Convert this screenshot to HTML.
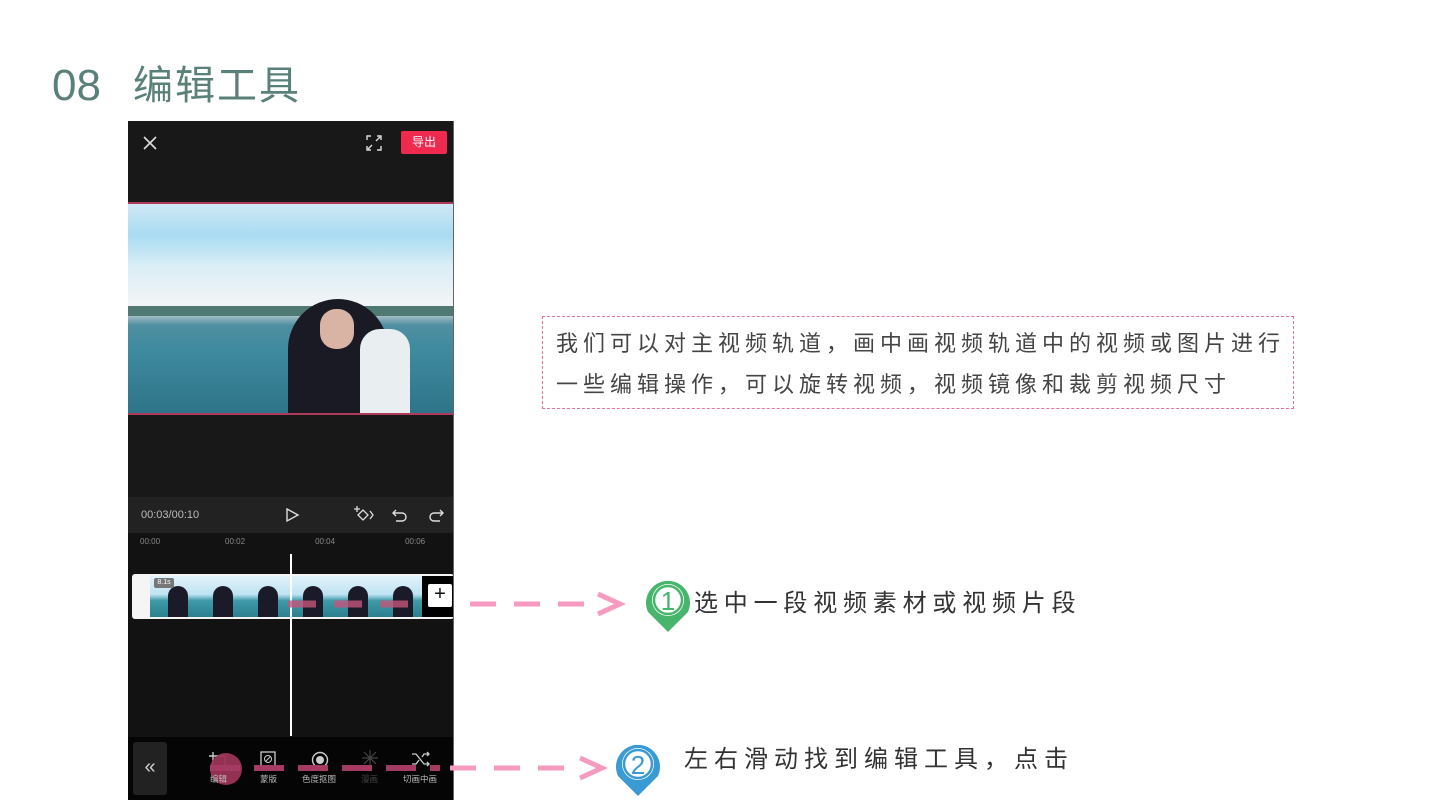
<!DOCTYPE html>
<html><head><meta charset="utf-8"><style>
*{margin:0;padding:0;box-sizing:border-box}
body{width:1440px;height:810px;background:#fff;position:relative;overflow:hidden;font-family:"Liberation Sans","Noto Sans CJK SC",sans-serif}
.a{position:absolute}
</style></head><body>
<div class="a" style="left:52px;top:58px;font-size:44px;color:#5a807a;line-height:56px">08</div>
<div class="a" style="left:133px;top:58px;font-size:40px;color:#5a807a;line-height:56px;letter-spacing:2px">编辑工具</div>

<!-- phone -->
<div class="a" style="left:128px;top:121px;width:326px;height:679px;background:#181818;overflow:hidden">
  <svg class="a" style="left:14px;top:14px" width="16" height="16"><path d="M2 2L14 14M14 2L2 14" stroke="#ddd" stroke-width="1.6"/></svg>
  <svg class="a" style="left:238px;top:14px" width="16" height="16"><path d="M1 5V1H5M11 1H15V5M15 11V15H11M5 15H1V11M2 14L6 10M14 2L10 6" stroke="#ddd" stroke-width="1.4" fill="none"/></svg>
  <div class="a" style="left:273px;top:10px;width:46px;height:23px;background:#f0294f;border-radius:2px;color:#fff;font-size:12px;text-align:center;line-height:23px">导出</div>
  <!-- video -->
  <div class="a" style="left:0;top:81px;width:326px;height:213px;border-top:2px solid #b03a5a;border-bottom:2px solid #b03a5a;background:linear-gradient(180deg,#cfe8f5 0%,#a9dcf2 15%,#dbeef6 30%,#eef3f6 45%,#f2f5f6 50%,#9bb8c2 54%,#4f8fa0 58%,#3f8a9f 70%,#2e7488 100%)">
    <div class="a" style="left:0;top:102px;width:326px;height:10px;background:#4f7a74"></div>
    <div class="a" style="left:160px;top:95px;width:100px;height:114px;background:#1a1a24;border-radius:50px 50px 0 0"></div>
    <div class="a" style="left:192px;top:105px;width:34px;height:40px;background:#d9b3a3;border-radius:16px"></div>
    <div class="a" style="left:232px;top:125px;width:50px;height:84px;background:#e9eef0;border-radius:20px 20px 0 0"></div>
  </div>
  <!-- controls -->
  <div class="a" style="left:0;top:376px;width:326px;height:36px;background:#222"></div>
  <div class="a" style="left:13px;top:388px;font-size:11px;color:#bbb">00:03/00:10</div>
  <svg class="a" style="left:156px;top:386px" width="16" height="16"><path d="M3 2L14 8L3 14Z" stroke="#ddd" stroke-width="1.4" fill="none"/></svg>
  <svg class="a" style="left:224px;top:384px" width="24" height="20"><path d="M6 10L11 5L16 10L11 15Z M18 6L21 10L18 14 M2 4H8M5 1V7" stroke="#ddd" stroke-width="1.3" fill="none"/></svg>
  <svg class="a" style="left:263px;top:386px" width="18" height="16"><path d="M5 3L2 6L5 9M2 6H11A4 4 0 0 1 11 14H5" stroke="#ddd" stroke-width="1.4" fill="none"/></svg>
  <svg class="a" style="left:299px;top:386px" width="18" height="16"><path d="M13 3L16 6L13 9M16 6H7A4 4 0 0 0 7 14H13" stroke="#ddd" stroke-width="1.4" fill="none"/></svg>
  <div class="a" style="left:0;top:412px;width:326px;height:204px;background:#121212"></div>
  <div class="a" style="left:12px;top:416px;font-size:8px;color:#888;width:310px;white-space:nowrap">00:00<span style="margin-left:65px">00:02</span><span style="margin-left:70px">00:04</span><span style="margin-left:70px">00:06</span></div>
  <div class="a" style="left:4px;top:453px;width:322px;height:45px;background:#f5f5f5;border-radius:3px"></div>
  <div class="a" style="left:22px;top:455px;width:272px;height:41px;background:linear-gradient(180deg,#e2f2fa 0%,#bfe3f3 45%,#3e9aa8 60%,#2c7f8e 100%)"></div>
  <div class="a" style="left:40px;top:465px;width:20px;height:31px;background:#1a1a28;border-radius:10px 10px 0 0;box-shadow:45px 0 #1a1a28,90px 0 #1a1a28,135px 0 #1a1a28,180px 0 #1a1a28,225px 0 #1a1a28"></div>
  <div class="a" style="left:26px;top:457px;width:20px;height:10px;background:#777;font-size:7px;color:#fff;text-align:center;line-height:10px;border-radius:2px">8.1s</div>
  <div class="a" style="left:294px;top:455px;width:32px;height:41px;background:#000"></div>
  <div class="a" style="left:300px;top:463px;width:24px;height:23px;background:#fff;border-radius:2px;font-size:20px;line-height:21px;text-align:center;color:#111">+</div>
  <div class="a" style="left:162px;top:433px;width:2px;height:182px;background:#fff"></div>
  <div class="a" style="left:0;top:616px;width:326px;height:63px;background:#050505"></div>
  <div class="a" style="left:5px;top:621px;width:34px;height:53px;background:#222;border-radius:3px;color:#ccc;font-size:20px;text-align:center;line-height:50px">«</div>
  <svg class="a" style="left:80px;top:630px" width="22" height="20"><path d="M5 1V15H21M1 5H17V19" stroke="#ccc" stroke-width="1.4" fill="none"/></svg>
  <div class="a" style="left:82px;top:632px;width:32px;height:32px;background:#9b3456;border-radius:50%;opacity:.95"></div>
  <svg class="a" style="left:132px;top:630px" width="16" height="16"><rect x="1" y="1" width="14" height="14" stroke="#ccc" fill="none" stroke-width="1.3"/><circle cx="8" cy="8" r="3.5" stroke="#ccc" fill="none"/><path d="M6 10L10 6" stroke="#ccc"/></svg>
  <svg class="a" style="left:183px;top:630px" width="18" height="18"><circle cx="9" cy="9" r="7.5" stroke="#ccc" fill="none" stroke-width="1.4"/><circle cx="9" cy="9" r="4" fill="#ccc"/></svg>
  <svg class="a" style="left:233px;top:628px" width="18" height="18"><path d="M9 1V17M1 9H17M3 3L15 15M15 3L3 15" stroke="#444" stroke-width="1.2"/></svg>
  <svg class="a" style="left:283px;top:630px" width="20" height="16"><path d="M1 3H5L13 13H18M1 13H5L8 9M11 6L13 3H18M16 1L18 3L16 5M16 11L18 13L16 15" stroke="#ccc" stroke-width="1.3" fill="none"/></svg>
  <div class="a" style="left:72px;top:652px;width:250px;font-size:8.5px;color:#bbb;white-space:nowrap"><span class="a" style="left:10px">编辑</span><span class="a" style="left:60px">蒙版</span><span class="a" style="left:102px">色度抠图</span><span class="a" style="left:161px;color:#444">漫画</span><span class="a" style="left:203px">切画中画</span></div>
  <div class="a" style="left:325px;top:0;width:1px;height:679px;background:#666"></div>
</div>

<!-- dashes -->
<svg class="a" style="left:0;top:0" width="1440" height="810">
  <path d="M288 604H420" stroke="#c4557b" stroke-width="7" stroke-dasharray="28 18" opacity=".8"/>
  <path d="M470 604H590" stroke="#f79ac0" stroke-width="5" stroke-dasharray="26 18"/>
  <path d="M598 594L620 604L598 614" stroke="#f79ac0" stroke-width="5" fill="none"/>
  <path d="M210 768H440" stroke="#a53a62" stroke-width="6" stroke-dasharray="30 14"/>
  <path d="M450 768H570" stroke="#f79ac0" stroke-width="5" stroke-dasharray="26 18"/>
  <path d="M580 758L602 768L580 778" stroke="#f79ac0" stroke-width="5" fill="none"/>
  <path d="M668 632L648 612A22 22 0 1 1 688 612Z" fill="#47b66c"/>
  <circle cx="668" cy="600" r="16" fill="#fff"/><circle cx="668" cy="600" r="14" fill="none" stroke="#47b66c" stroke-width="2.5"/>
  <text x="668" y="610" font-size="26" text-anchor="middle" fill="#47b66c" font-family="Liberation Sans">1</text>
  <path d="M638 796L618 776A22 22 0 1 1 658 776Z" fill="#3a9bd4"/>
  <circle cx="638" cy="764" r="16" fill="#fff"/><circle cx="638" cy="764" r="14" fill="none" stroke="#3a9bd4" stroke-width="2.5"/>
  <text x="638" y="774" font-size="26" text-anchor="middle" fill="#3a9bd4" font-family="Liberation Sans">2</text>
</svg>

<div class="a" style="left:694px;top:588px;font-size:24px;color:#333;letter-spacing:5.8px;line-height:32px;white-space:nowrap">选中一段视频素材或视频片段</div>
<div class="a" style="left:684px;top:744px;font-size:24px;color:#333;letter-spacing:6px;line-height:32px;white-space:nowrap">左右滑动找到编辑工具，点击</div>

<div class="a" style="left:542px;top:316px;width:752px;height:93px;border:1px dashed #e7739a;padding:6px 0 0 13px;font-size:22px;color:#444;letter-spacing:5.0px;line-height:41px;white-space:nowrap">我们可以对主视频轨道，画中画视频轨道中的视频或图片进行<br>一些编辑操作，可以旋转视频，视频镜像和裁剪视频尺寸</div>
</body></html>
